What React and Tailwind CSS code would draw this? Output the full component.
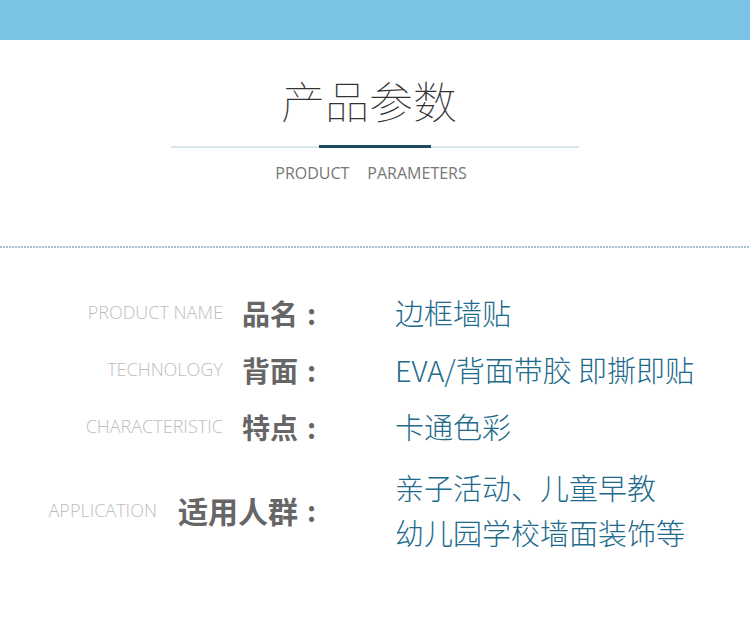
import React from "react";

const rows = [
  { en: "PRODUCT NAME", cn: "品名", value: ["边框墙贴"] },
  { en: "TECHNOLOGY", cn: "背面", value: ["EVA/背面带胶 即撕即贴"] },
  { en: "CHARACTERISTIC", cn: "特点", value: ["卡通色彩"] },
  { en: "APPLICATION", cn: "适用人群", value: ["亲子活动、儿童早教", "幼儿园学校墙面装饰等"] },
];

function App() {
  return (
    <div
      className="w-[750px] h-[629px] bg-white overflow-hidden"
      style={{ fontFamily: '"Noto Sans CJK SC", "Noto Sans", sans-serif' }}
    >
      {/* top band */}
      <div className="h-[40px] bg-[#7ac4e3]" />

      {/* heading */}
      <div className="flex flex-col items-center pt-[38px]">
        <h1 className="pr-[12px] text-[44px] leading-[44px] font-thin text-[#333]">
          产品参数
        </h1>
        <div className="mt-[24px] w-[408px] h-[2px] bg-[#d9e6ec] flex justify-center">
          <div className="w-[112px] h-[3px] -mt-[1px] bg-[#1b4b5e]" />
        </div>
        <p
          className="mt-[15px] pr-[8px] text-[16px] leading-[20px] text-[#777] flex gap-[18px]"
          style={{ fontFamily: '"Open Sans", sans-serif' }}
        >
          <span>PRODUCT</span>
          <span>PARAMETERS</span>
        </p>
      </div>

      {/* dotted divider */}
      <div className="mt-[63px] h-[2px] w-full bg-[repeating-linear-gradient(to_right,#a7c0cd_0px,#a7c0cd_2px,transparent_2px,transparent_3px)]" />

      {/* params */}
      <div className="mt-[36px] flex flex-col">
        {rows.map((r, i) => (
          <div
            key={r.en}
            className={
              "grid grid-cols-[316px_1fr] gap-x-[79px] items-center " +
              (i === 3 ? "mt-[10px] h-[90px]" : "h-[57px]")
            }
          >
            <div className="flex items-center justify-end">
              <span
                className={
                  "text-[18px] font-light text-[#bdbdbd] " + (i === 3 ? "mr-[21px]" : "mr-[19px]")
                }
                style={{ fontFamily: '"Open Sans", sans-serif' }}
              >
                {r.en}
              </span>
              <span
                className={"font-bold text-[#666] " + (i === 3 ? "text-[30px]" : "text-[28px]")}
              >
                {r.cn}
              </span>
              <span className="ml-[9px] text-[28px] font-bold text-[#666]">:</span>
            </div>
            <div className="flex flex-col">
              {r.value.map((v) => (
                <span key={v} className="text-[29px] leading-[45px] font-light text-[#216a8b]">
                  {v}
                </span>
              ))}
            </div>
          </div>
        ))}
      </div>
    </div>
  );
}

export default App;
